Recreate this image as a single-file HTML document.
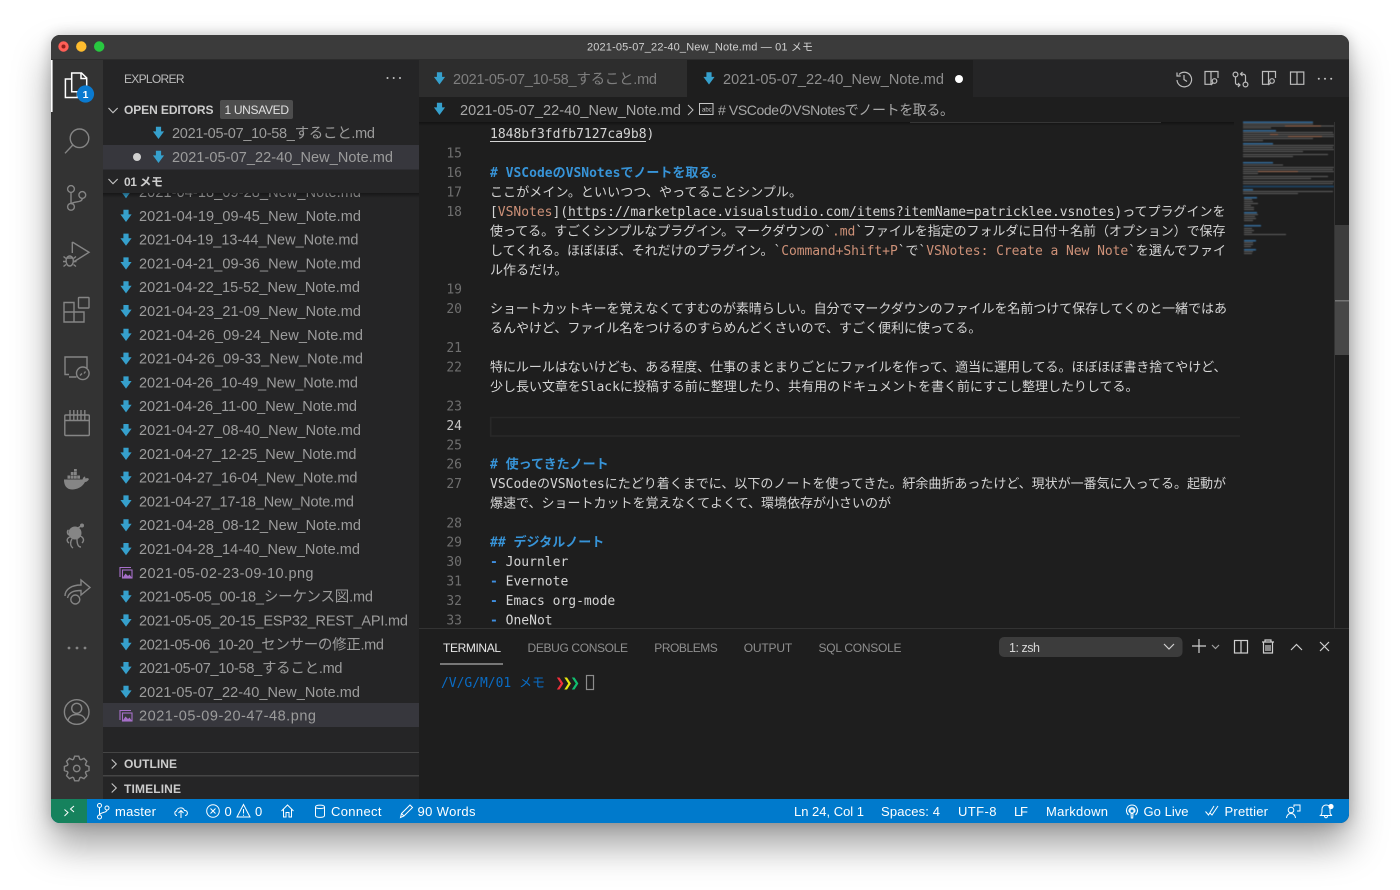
<!DOCTYPE html>
<html lang="ja"><head><meta charset="utf-8"><title>2021-05-07_22-40_New_Note.md — 01 メモ</title>
<style>
html,body{margin:0;padding:0;width:1400px;height:890px;background:#fff;overflow:hidden}
#w{position:absolute;left:51px;top:35px;width:1298px;height:788px;border-radius:9px;background:#1e1e1e;box-shadow:0 22px 38px rgba(0,0,0,.38),0 0 14px rgba(0,0,0,.2)}
svg{position:absolute;left:0;top:0;filter:blur(.25px)}
text{white-space:pre;font-family:"Liberation Sans","Noto Sans CJK JP",sans-serif}
.m text,text.m{font-family:"DejaVu Sans Mono","Noto Sans CJK JP",monospace;font-size:13px;fill:#d4d4d4}
.n text{font-family:"DejaVu Sans Mono",monospace;font-size:13px;fill:#6f6f6f;text-anchor:end}
.f text{font-size:14.5px;fill:#9c9c9c}
.s text{font-size:13px;fill:#fff}
.h{font-size:12px;font-weight:bold;fill:#cccccc}
.t{font-size:12px;fill:#8f8f8f}
.a *{fill:none;stroke:#858585;stroke-width:1.4}
.i *{fill:none;stroke:#bdbdbd;stroke-width:1.2}
.w *{fill:none;stroke:#fff;stroke-width:1}
</style></head><body>
<div id="w"></div>
<svg width="1400" height="890" viewBox="0 0 1400 890" xmlns="http://www.w3.org/2000/svg">
<defs>
<clipPath id="win"><rect x="51" y="35" width="1298" height="788" rx="9"/></clipPath>
<clipPath id="ed"><rect x="419" y="122" width="915" height="506"/></clipPath>
<clipPath id="fl"><rect x="103" y="193" width="316" height="559"/></clipPath>
<linearGradient id="sh" x1="0" y1="0" x2="0" y2="1"><stop offset="0" stop-color="#000" stop-opacity=".4"/><stop offset="1" stop-color="#000" stop-opacity="0"/></linearGradient>
<path id="md" d="M-2.6-6.2H2.6V-1.6H5.6L0 6-5.6-1.6H-2.6Z" fill="#36a0cc"/>
</defs>
<g clip-path="url(#win)">
<!-- title bar -->
<rect x="51" y="35" width="1298" height="25" fill="#3b3b3b"/>
<rect x="51" y="59" width="1298" height="1" fill="#2c2c2c"/>
<circle cx="63.5" cy="46.5" r="5.2" fill="#ff5f57"/><circle cx="63.5" cy="46.5" r="2" fill="#8f1f1a"/>
<circle cx="81.3" cy="46.5" r="5.2" fill="#febc2e"/>
<circle cx="99.2" cy="46.5" r="5.2" fill="#28c840"/>
<text x="587" y="50.5" font-size="11" fill="#cfcfcf" textLength="226">2021-05-07_22-40_New_Note.md — 01 メモ</text>

<!-- activity bar -->
<rect x="51" y="60" width="52" height="739" fill="#333333"/>
<rect x="51" y="60" width="1.6" height="52" fill="#ffffff"/>
<g fill="none" stroke="#fff" stroke-width="1.5">
<path d="M71.7 79H65.4V97.5H77.5V91.7"/>
<path d="M71.7 73H81.5L86.7 78V91.7H71.7Z"/>
<path d="M81 73V78.5H86.7"/>
</g>
<circle cx="85.5" cy="94" r="8.6" fill="#0a7ad0"/>
<text x="85.5" y="98" font-size="10.5" font-weight="bold" fill="#fff" text-anchor="middle">1</text>
<g class="a">
<circle cx="79.5" cy="138.3" r="9.3"/><path d="M72.8 145 65 153.3" stroke-width="1.6"/>
<circle cx="71" cy="189" r="3.4"/><circle cx="71" cy="206.8" r="3.4"/><circle cx="82.3" cy="195" r="3.4"/>
<path d="M71 192.4V203.4M82.3 198.4C82 203 74 201 71 204"/>
<path d="M72.3 242 89 252.3 73.5 262M72.3 242V253"/>
<ellipse cx="69.7" cy="261" rx="3.6" ry="5"/><path d="M63.5 256.5 66 258.5M76 256.5 73.5 258.5M63 261.5H66M73.5 261.5H76.5M63.5 266.5 66 264.5M76 266.5 73.5 264.5M66.5 258H73"/>
<rect x="78.5" y="297.5" width="10.5" height="10.5" rx=".6"/>
<path d="M64 302.5H74V322H64ZM74 312H84V322H74ZM64 312H74"/>
<path d="M69 374.5H65V357H87V368M69 377H76.5"/><circle cx="82.8" cy="373.3" r="6.3"/><path d="M80 375.5 82 373.5M85.5 371.5 84 373.5" stroke-width="1"/>
<rect x="64.8" y="415" width="24.5" height="20.5" rx="1"/><path d="M64.8 420.5H89.3M70 410V420M73.8 410V420M77.5 410V420M81 410V420M84.8 410V420"/>
</g>
<path d="M64 479.5H82.5C83 477.5 84 476.5 85 476.5L85.5 478.5C87 478 88 478 89 479C88 481 86.5 482 85 482C82.5 487 77 489.5 72 489.5C66.5 489.5 63.8 485 64 479.5Z" fill="#858585"/>
<g fill="#858585"><rect x="67.5" y="475.5" width="2.8" height="3.2"/><rect x="70.8" y="475.5" width="2.8" height="3.2"/><rect x="74" y="475.5" width="2.8" height="3.2"/><rect x="70.8" y="472" width="2.8" height="3"/><rect x="74" y="472" width="2.8" height="3"/><rect x="77.2" y="475.5" width="2.8" height="3.2"/><rect x="74" y="469" width="2.8" height="2.6"/></g>
<g fill="#858585"><circle cx="75" cy="533" r="6.5"/><circle cx="82" cy="525.5" r="2"/></g>
<g class="a"><path d="M78 528 81 526" stroke-width="1.2"/><path d="M70 537C67 538 66 541 69 543M72 539C70 542 70 546 73 548M77 539C77 543 78 547 81 547M80 536C83 537 85 540 82 543M69 535C67 534 67 531 68.5 530" stroke-width="1.7"/></g>
<g class="a" stroke-width="1.6">
<path d="M65 596C65 589 72 585 81 585V580L90 587.5 81 595V590.5C74 590.5 69 592 67.5 598"/>
<circle cx="75.3" cy="599.5" r="4.5"/>
</g>
<g fill="#858585"><circle cx="69" cy="648" r="1.4"/><circle cx="77" cy="648" r="1.4"/><circle cx="85" cy="648" r="1.4"/></g>
<g class="a">
<circle cx="76.7" cy="712" r="12.3"/><circle cx="76.7" cy="708.3" r="5"/><path d="M68 720.5C69 716 73 714.5 76.7 714.5S84.5 716 85.5 720.5"/>
<path d="M-3.2-9.2-2-12.3H2L3.2-9.2 4.24-8.77 7.28-10.11 10.11-7.28 8.77-4.24 9.2-3.2 12.3-2V2L9.2 3.2 8.77 4.24 10.11 7.28 7.28 10.11 4.24 8.77 3.2 9.2 2 12.3H-2L-3.2 9.2-4.24 8.77-7.28 10.11-10.11 7.28-8.77 4.24-9.2 3.2-12.3 2V-2L-9.2-3.2-8.77-4.24-10.11-7.28-7.28-10.11-4.24-8.77Z" transform="translate(76.7 768.5)"/>
<circle cx="76.7" cy="768.5" r="3.2"/>
</g>

<!-- sidebar -->
<rect x="103" y="60" width="316" height="739" fill="#252526"/>
<text x="124" y="83" font-size="12" fill="#bbbbbb" textLength="60.5">EXPLORER</text>
<g fill="#c5c5c5"><circle cx="387.5" cy="78" r="1"/><circle cx="393.7" cy="78" r="1"/><circle cx="400" cy="78" r="1"/></g>
<path d="M108.5 108 113 112.7 117.7 108" fill="none" stroke="#c5c5c5" stroke-width="1.1"/>
<text class="h" x="124" y="114" textLength="89.5">OPEN EDITORS</text>
<rect x="220" y="100" width="73" height="19" rx="2" fill="#4d4d4d"/>
<text x="224.5" y="114" font-size="12" fill="#e0e0e0" textLength="64.5">1 UNSAVED</text>
<rect x="103" y="145" width="316" height="24.5" fill="#37373d"/>
<circle cx="137" cy="157" r="4" fill="#d0d0d0"/>
<use href="#md" x="158.5" y="133"/><use href="#md" x="158.5" y="157"/>
<g class="f">
<text x="172" y="138" textLength="203">2021-05-07_10-58_すること.md</text>
<text x="172" y="162" textLength="221">2021-05-07_22-40_New_Note.md</text>
</g>
<path d="M108.5 179 113 183.7 117.7 179" fill="none" stroke="#c5c5c5" stroke-width="1.1"/>
<text class="h" x="124" y="186" textLength="39">01 メモ</text>
<g clip-path="url(#fl)">
<rect x="103" y="703" width="316" height="24" fill="#37373d"/>
<g class="f">
<text x="139" y="197.2" textLength="222">2021-04-18_09-28_New_Note.md</text>
<text x="139" y="221" textLength="222">2021-04-19_09-45_New_Note.md</text>
<text x="139" y="244.6" textLength="219.5">2021-04-19_13-44_New_Note.md</text>
<text x="139" y="268.6" textLength="222">2021-04-21_09-36_New_Note.md</text>
<text x="139" y="292.2" textLength="221">2021-04-22_15-52_New_Note.md</text>
<text x="139" y="316.2" textLength="222">2021-04-23_21-09_New_Note.md</text>
<text x="139" y="340" textLength="224">2021-04-26_09-24_New_Note.md</text>
<text x="139" y="363.6" textLength="224">2021-04-26_09-33_New_Note.md</text>
<text x="139" y="387.6" textLength="219">2021-04-26_10-49_New_Note.md</text>
<text x="139" y="411.2" textLength="218">2021-04-26_11-00_New_Note.md</text>
<text x="139" y="435.2" textLength="222">2021-04-27_08-40_New_Note.md</text>
<text x="139" y="458.8" textLength="217.5">2021-04-27_12-25_New_Note.md</text>
<text x="139" y="482.6" textLength="218.5">2021-04-27_16-04_New_Note.md</text>
<text x="139" y="506.6" textLength="215">2021-04-27_17-18_New_Note.md</text>
<text x="139" y="530.2" textLength="222">2021-04-28_08-12_New_Note.md</text>
<text x="139" y="554.2" textLength="221">2021-04-28_14-40_New_Note.md</text>
<text x="139" y="578" textLength="174.5">2021-05-02-23-09-10.png</text>
<text x="139" y="601.6" textLength="234">2021-05-05_00-18_シーケンス図.md</text>
<text x="139" y="625.6" textLength="269">2021-05-05_20-15_ESP32_REST_API.md</text>
<text x="139" y="649.4" textLength="245">2021-05-06_10-20_センサーの修正.md</text>
<text x="139" y="673" textLength="203.5">2021-05-07_10-58_すること.md</text>
<text x="139" y="696.8" textLength="221">2021-05-07_22-40_New_Note.md</text>
<text x="139" y="720.6" textLength="177">2021-05-09-20-47-48.png</text>
</g>
<use href="#md" x="126" y="192.2"/><use href="#md" x="126" y="216"/><use href="#md" x="126" y="239.8"/><use href="#md" x="126" y="263.6"/><use href="#md" x="126" y="287.4"/><use href="#md" x="126" y="311.2"/><use href="#md" x="126" y="335"/><use href="#md" x="126" y="358.8"/><use href="#md" x="126" y="382.6"/><use href="#md" x="126" y="406.4"/><use href="#md" x="126" y="430.2"/><use href="#md" x="126" y="454"/><use href="#md" x="126" y="477.8"/><use href="#md" x="126" y="501.6"/><use href="#md" x="126" y="525.4"/><use href="#md" x="126" y="549.2"/><use href="#md" x="126" y="596.8"/><use href="#md" x="126" y="620.6"/><use href="#md" x="126" y="644.4"/><use href="#md" x="126" y="668.2"/><use href="#md" x="126" y="692"/>
<g fill="none" stroke="#a66fc9" stroke-width="1.1"><path d="M120 577V567.5H131"/><rect x="122.5" y="570" width="9.5" height="8"/></g><path d="M122.5 578 125.5 573.5 128 576 129.5 574.5 132 578Z" fill="#a66fc9"/>
<g fill="none" stroke="#a66fc9" stroke-width="1.1"><path d="M120 720V710.5H131"/><rect x="122.5" y="713" width="9.5" height="8"/></g><path d="M122.5 721 125.5 716.5 128 719 129.5 717.5 132 721Z" fill="#a66fc9"/>
<rect x="103" y="193" width="316" height="5" fill="url(#sh)"/>
</g>
<rect x="103" y="752" width="316" height="1" fill="#454545"/>
<rect x="103" y="775" width="316" height="1.5" fill="#454545"/>
<path d="M111.7 759.5 116.3 764 111.7 768.5M111.7 783.5 116.3 788 111.7 792.5" fill="none" stroke="#c5c5c5" stroke-width="1.1"/>
<text class="h" x="124" y="768" textLength="53">OUTLINE</text>
<text class="h" x="124" y="793" textLength="57">TIMELINE</text>

<!-- tabs -->
<rect x="419" y="60" width="930" height="37" fill="#252526"/>
<rect x="419" y="60" width="268" height="37" fill="#2d2d2d"/>
<rect x="687" y="60" width="286" height="37" fill="#1e1e1e"/>
<use href="#md" x="439.5" y="78.5"/>
<text x="453" y="84" font-size="14.5" fill="#7f7f7f" textLength="204">2021-05-07_10-58_すること.md</text>
<use href="#md" x="709" y="78.5"/>
<text x="723" y="84" font-size="14.5" fill="#8f8f8f" textLength="221">2021-05-07_22-40_New_Note.md</text>
<circle cx="959" cy="79" r="4" fill="#fff"/>
<g class="i">
<path d="M1179 74.5A7.3 7.3 0 1 1 1177 80M1177 72.5V76H1180.7M1184 75V79.5L1187 81.5"/>
<path d="M1211 84.3H1205V71.5H1218V78M1211 71.5V84.3"/><circle cx="1214.5" cy="81" r="2.3"/><path d="M1213 83 1210.8 85"/>
<circle cx="1235.5" cy="74.5" r="2.4"/><circle cx="1245.5" cy="84.5" r="2.4"/><path d="M1235.5 77V83C1235.5 84.5 1237 85 1240 85M1245.5 82V76C1245.5 74.5 1244 74 1241 74M1242.5 72 1240.5 74 1242.5 76M1238 83 1240 85 1238 87"/>
<path d="M1268.5 84.3H1262.5V71.5H1275.5V78M1268.5 71.5V84.3"/><circle cx="1272" cy="81" r="2.3"/><path d="M1270.5 83 1268.3 85"/>
<path d="M1290.5 72H1303.8V84.3H1290.5ZM1297 72V84.3"/>
</g>
<g fill="#c5c5c5"><circle cx="1318.8" cy="78.8" r="1"/><circle cx="1325" cy="78.8" r="1"/><circle cx="1331.2" cy="78.8" r="1"/></g>

<!-- breadcrumb -->
<rect x="419" y="97" width="930" height="25" fill="#1e1e1e"/>
<use href="#md" x="439.5" y="109"/>
<text x="460" y="115" font-size="14.5" fill="#a8a8a8" textLength="221">2021-05-07_22-40_New_Note.md</text>
<path d="M688 105 693 110 688 115" fill="none" stroke="#bdbdbd" stroke-width="1"/>
<rect x="699.5" y="103.5" width="13.5" height="11" fill="none" stroke="#c5c5c5" stroke-width="1"/>
<text x="702" y="111.5" font-size="6" fill="#c5c5c5">abc</text>
<text x="718" y="115" font-size="14" fill="#a8a8a8" textLength="236"># VSCodeのVSNotesでノートを取る。</text>

<!-- editor -->
<rect x="419" y="122" width="930" height="506" fill="#1e1e1e"/>
<g clip-path="url(#ed)">
<path d="M1240 417.5H490.7V436H1240" fill="none" stroke="#282828" stroke-width="1.6"/>
<rect x="910" y="121.5" width="251" height="1" fill="#8a8a8a"/>
<g class="n">
<text x="462" y="157.5">15</text><text x="462" y="177">16</text><text x="462" y="196.5">17</text><text x="462" y="216">18</text><text x="462" y="293.7">19</text><text x="462" y="313">20</text><text x="462" y="352.2">21</text><text x="462" y="371.7">22</text><text x="462" y="410.5">23</text><text x="462" y="430" style="fill:#c6c6c6">24</text><text x="462" y="449.6">25</text><text x="462" y="468.7">26</text><text x="462" y="488.2">27</text><text x="462" y="527.3">28</text><text x="462" y="546.7">29</text><text x="462" y="566.2">30</text><text x="462" y="585.7">31</text><text x="462" y="605.2">32</text><text x="462" y="624.7">33</text>
</g>
<g class="m">
<text x="490" y="138">1848bf3fdfb7127ca9b8)</text>
<rect x="490" y="141" width="156" height="1" fill="#d4d4d4"/>
<text x="490" y="177" style="fill:#3794d8;font-weight:bold"># VSCodeのVSNotesでノートを取る。</text>
<text x="490" y="196.5" textLength="312">ここがメイン。といいつつ、やってることシンプル。</text>
<text x="490" y="216" textLength="735.5">[<tspan fill="#ce9178">VSNotes</tspan>](https://marketplace.visualstudio.com/items?itemName=patricklee.vsnotes)ってプラグインを</text>
<rect x="567" y="219" width="548" height="1" fill="#d4d4d4"/>
<text x="490" y="235.5" textLength="735.5">使ってる。すごくシンプルなプラグイン。マークダウンの`<tspan fill="#ce9178">.md</tspan>`ファイルを指定のフォルダに日付＋名前（オプション）で保存</text>
<text x="490" y="255" textLength="736">してくれる。ほぼほぼ、それだけのプラグイン。`<tspan fill="#ce9178">Command+Shift+P</tspan>`で`<tspan fill="#ce9178">VSNotes: Create a New Note</tspan>`を選んでファイ</text>
<text x="490" y="274.5">ル作るだけ。</text>
<text x="490" y="313" textLength="737">ショートカットキーを覚えなくてすむのが素晴らしい。自分でマークダウンのファイルを名前つけて保存してくのと一緒ではあ</text>
<text x="490" y="332.5">るんやけど、ファイル名をつけるのすらめんどくさいので、すごく便利に使ってる。</text>
<text x="490" y="371.7" textLength="736.5">特にルールはないけども、ある程度、仕事のまとまりごとにファイルを作って、適当に運用してる。ほぼほぼ書き捨てやけど、</text>
<text x="490" y="391.2" textLength="648.5">少し長い文章をSlackに投稿する前に整理したり、共有用のドキュメントを書く前にすこし整理したりしてる。</text>
<text x="490" y="468.7" style="fill:#3794d8;font-weight:bold"># 使ってきたノート</text>
<text x="490" y="488.2">VSCodeのVSNotesにたどり着くまでに、以下のノートを使ってきた。紆余曲折あったけど、現状が一番気に入ってる。起動が</text>
<text x="490" y="507.7">爆速で、ショートカットを覚えなくてよくて、環境依存が小さいのが</text>
<text x="490" y="546.7" style="fill:#3794d8;font-weight:bold">## デジタルノート</text>
<text x="490" y="566.2"><tspan fill="#3f8fe0" font-weight="bold">-</tspan> Journler</text>
<text x="490" y="585.7"><tspan fill="#3f8fe0" font-weight="bold">-</tspan> Evernote</text>
<text x="490" y="605.2"><tspan fill="#3f8fe0" font-weight="bold">-</tspan> Emacs org-mode</text>
<text x="490" y="624.7"><tspan fill="#3f8fe0" font-weight="bold">-</tspan> OneNot</text>
</g>
</g>
<rect x="419" y="122" width="815" height="4" fill="url(#sh)"/>

<!-- minimap -->
<g style="filter:blur(.4px)">
<g fill="#3b7fb8" opacity=".8"><rect x="1243" y="121.5" width="70" height="1.5"/><rect x="1243" y="130" width="33" height="1.5"/><rect x="1243" y="143" width="30" height="1.5"/><rect x="1243" y="162" width="30" height="1.5"/><rect x="1243" y="189" width="10" height="1.5"/><rect x="1244" y="197" width="13" height="1.5"/><rect x="1244" y="212" width="13" height="1.5"/><rect x="1244" y="225" width="17" height="1.5"/><rect x="1244" y="240" width="12" height="1.5"/><rect x="1244" y="249" width="12" height="1.5"/></g>
<rect x="1243" y="185.5" width="91" height="2" fill="#1d3f5c"/>
<g fill="#8c8c8c" opacity=".6">
<rect x="1243" y="123.5" width="70" height="1"/><rect x="1243" y="125.5" width="91" height="1"/><rect x="1243" y="127.3" width="28" height="1"/>
<rect x="1243" y="132" width="90" height="1"/><rect x="1243" y="134" width="91" height="1"/><rect x="1243" y="136" width="91" height="1"/><rect x="1243" y="138" width="70" height="1"/><rect x="1243" y="140" width="20" height="1"/>
<rect x="1243" y="145" width="91" height="1"/><rect x="1243" y="147" width="90" height="1"/><rect x="1243" y="149" width="91" height="1"/><rect x="1243" y="151" width="60" height="1"/><rect x="1243" y="154" width="85" height="1"/><rect x="1243" y="156" width="50" height="1"/>
<rect x="1243" y="164.5" width="40" height="1"/><rect x="1243" y="167" width="91" height="1"/><rect x="1243" y="169" width="90" height="1"/><rect x="1243" y="171" width="91" height="1"/><rect x="1243" y="173" width="15" height="1"/><rect x="1243" y="176" width="85" height="1"/><rect x="1243" y="178" width="68" height="1"/><rect x="1243" y="181" width="91" height="1"/><rect x="1243" y="183" width="90" height="1"/>
<rect x="1243" y="191" width="90" height="1"/><rect x="1243" y="193" width="55" height="1"/>
<rect x="1244" y="199" width="8" height="1"/><rect x="1244" y="201" width="9" height="1"/><rect x="1244" y="203" width="14" height="1"/><rect x="1244" y="205" width="7" height="1"/><rect x="1244" y="207" width="10" height="1"/><rect x="1244" y="209" width="10" height="1"/>
<rect x="1244" y="214" width="14" height="1"/><rect x="1244" y="216" width="11" height="1"/><rect x="1244" y="218" width="12" height="1"/><rect x="1244" y="220" width="9" height="1"/>
<rect x="1244" y="228" width="8" height="1"/><rect x="1244" y="230" width="10" height="1"/><rect x="1244" y="232" width="8" height="1"/><rect x="1244" y="234" width="42" height="1"/>
<rect x="1244" y="242" width="9" height="1"/><rect x="1244" y="244" width="9" height="1"/><rect x="1244" y="246" width="7" height="1"/>
<rect x="1244" y="251" width="9" height="1"/><rect x="1244" y="253" width="8" height="1"/>
</g>
<g fill="#c27a55" opacity=".7"><rect x="1285" y="125.5" width="36" height="1"/><rect x="1270" y="134" width="8" height="1"/><rect x="1288" y="136" width="34" height="1"/><rect x="1258" y="171" width="40" height="1"/></g>
</g>

<!-- scrollbar -->
<rect x="1334" y="122" width="1" height="506" fill="#333"/>
<rect x="1335" y="225" width="14" height="75" fill="#3d3d3d"/>
<rect x="1335" y="300" width="14" height="1.5" fill="#757575"/>
<rect x="1335" y="301.5" width="14" height="53.5" fill="#474747"/>

<!-- panel -->
<rect x="419" y="628" width="930" height="171" fill="#1e1e1e"/>
<rect x="419" y="628" width="930" height="1" fill="#333"/>
<text x="443" y="652" font-size="12" fill="#e7e7e7" textLength="58">TERMINAL</text>
<rect x="440" y="663.5" width="63" height="1" fill="#d0d0d0"/>
<text class="t" x="527.5" y="652" textLength="100.5">DEBUG CONSOLE</text>
<text class="t" x="654.3" y="652" textLength="63.5">PROBLEMS</text>
<text class="t" x="743.7" y="652" textLength="48.5">OUTPUT</text>
<text class="t" x="818.5" y="652" textLength="83">SQL CONSOLE</text>
<rect x="999" y="637" width="183.5" height="20" rx="5" fill="#3c3c3c"/>
<text x="1009" y="652" font-size="12.5" fill="#d8d8d8" textLength="31">1: zsh</text>
<g fill="none" stroke="#d0d0d0" stroke-width="1.2">
<path d="M1164 644 1169 649 1174 644"/>
<path d="M1192 646H1206M1199 639V653"/>
<path d="M1212 645 1215.5 648.5 1219 645" stroke="#a0a0a0"/>
<rect x="1234.5" y="640.5" width="13" height="12.5"/><path d="M1241 640.5V653"/>
<path d="M1262 642H1274M1265 642V640H1271V642M1263.5 642.5V653H1272.5V642.5M1266 645V651M1268 645V651M1270 645V651"/>
<path d="M1291 650 1296.5 644.5 1302 650"/>
<path d="M1320 642 1329 651M1329 642 1320 651"/>
</g>
<text class="m" x="441" y="687" style="fill:#0a6cc4" textLength="104">/V/G/M/01 メモ</text>
<text x="555" y="686.5" font-size="12" font-weight="bold" style="font-family:'DejaVu Sans',sans-serif" fill="#ef2f3a">❯</text>
<text x="562.5" y="686.5" font-size="12" font-weight="bold" style="font-family:'DejaVu Sans',sans-serif" fill="#e5e510">❯</text>
<text x="570" y="686.5" font-size="12" font-weight="bold" style="font-family:'DejaVu Sans',sans-serif" fill="#10c070">❯</text>
<rect x="586.5" y="675.5" width="7" height="14" fill="none" stroke="#8c8c8c" stroke-width="1.2"/>

<!-- status bar -->
<rect x="51" y="799" width="1298" height="24" fill="#007acc"/>
<rect x="51" y="799" width="36" height="24" fill="#16825d"/>
<g class="w">
<path d="M64.5 809.5 68 812.5 64.5 816M74 806 70.5 809 74 812"/>
<circle cx="99.5" cy="805.5" r="2"/><circle cx="99.5" cy="817" r="2"/><circle cx="107" cy="808" r="2"/><path d="M99.5 807.5V815M107 810C107 813 100 812 99.5 815"/>
<path d="M177 815.5C174.5 815.5 174 811.5 176.5 811 177 807.5 183 806.5 184.5 810.5 188 810 188.5 815.5 185 815.5M181 818V811M178.5 813 181 810.5 183.5 813"/>
<circle cx="213" cy="811" r="6.3"/><path d="M210.5 808.5 215.5 813.5M215.5 808.5 210.5 813.5"/>
<path d="M243.5 804.5 250 817H237ZM243.5 809V813.5M243.5 814.7V815.8"/>
<path d="M281.5 811 287.5 805 293.5 811M283.5 809.5V817H286V812.5H289V817H291.5V809.5"/>
<path d="M315.5 807V815.5C315.5 818 324.5 818 324.5 815.5V807C324.5 804.5 315.5 804.5 315.5 807ZM315.5 807C315.5 809 324.5 809 324.5 807"/>
<path d="M400.5 817.5 401.5 813.5 410 805 412.5 807.5 404 816ZM401.5 813.5 404 816"/>
<circle cx="1132" cy="811" r="2"/><path d="M1128.5 815C1124.5 811 1127 805 1132 805S1139.5 811 1135.5 815M1129.8 812.5C1128 810.5 1129.5 807.7 1132 807.7S1136 810.5 1134.2 812.5M1131 813.5H1133L1132.7 818H1131.3Z"/>
<path d="M1205.5 811.5 1208.5 815 1214 806M1210 813 1212 815 1218 806" stroke="#b8dcf5" stroke-width=".8"/>
<circle cx="1291" cy="810" r="2.8"/><path d="M1286.5 818C1287 814.5 1289 813.5 1291 813.5S1295 814.5 1295.5 818M1294 807V805H1300V811H1297"/>
<path d="M1320.5 815.5C1322.5 814 1322 811 1322 809.5 1322 806.5 1324 805 1326 805S1330 806 1330 808V812C1330 814 1331 815 1332 815.5ZM1324.5 815.5C1324.5 818.5 1327.5 818.5 1327.5 815.5"/>
</g>
<circle cx="1331" cy="806.5" r="2.6" fill="#fff"/>
<g class="s">
<text x="115" y="816" textLength="41">master</text>
<text x="224.5" y="816">0</text><text x="255" y="816">0</text>
<text x="331" y="816" textLength="50.5">Connect</text>
<text x="417.5" y="816" textLength="58">90 Words</text>
<text x="794" y="816" textLength="70">Ln 24, Col 1</text>
<text x="881" y="816" textLength="59">Spaces: 4</text>
<text x="958" y="816" textLength="38.5">UTF-8</text>
<text x="1014" y="816" textLength="14">LF</text>
<text x="1046" y="816" textLength="62">Markdown</text>
<text x="1143.5" y="816" textLength="45">Go Live</text>
<text x="1224.5" y="816" textLength="43.5">Prettier</text>
</g>
</g>
</svg>
</body></html>
